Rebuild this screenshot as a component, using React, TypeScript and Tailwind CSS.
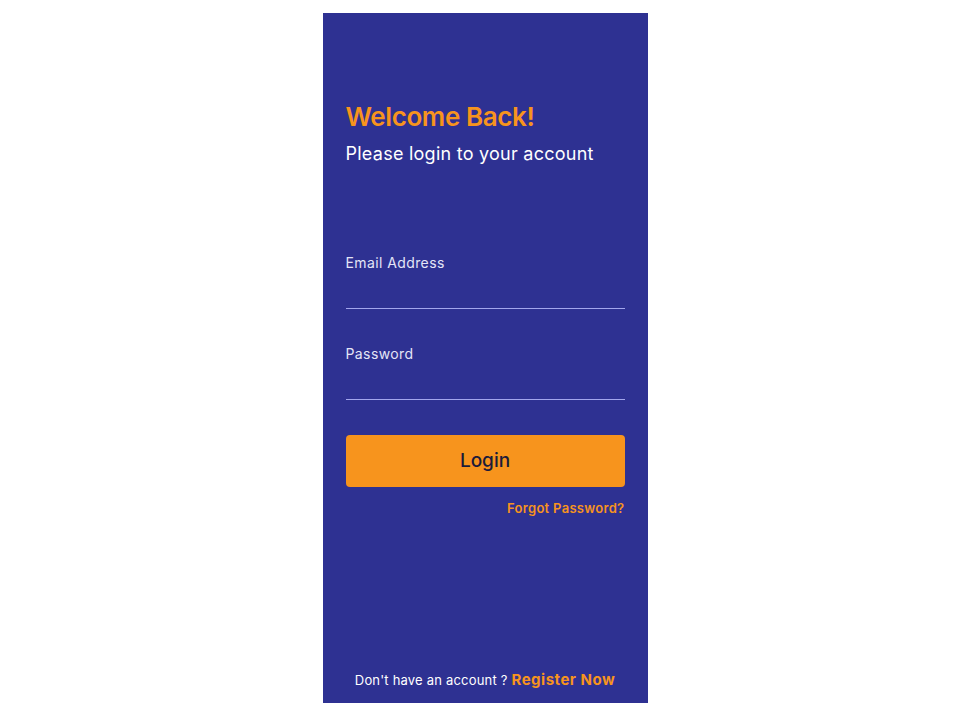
export default function App() {
  return (
    <div className="flex min-h-[720px] w-full justify-center bg-white pl-[10px] pt-[13px]" style={{ fontFamily: 'Inter, "Open Sans", sans-serif' }}>
      <div className="flex h-[690px] w-[325px] flex-col bg-[#2e3192] px-[23px]">
        {/* heading */}
        <div className="pt-[86px]">
          <h1 className="text-[26px] font-semibold leading-[36px] tracking-[-0.4px] text-[#f7941d]">Welcome Back!</h1>
          <p className="mt-[6px] text-[18px] leading-[26px] tracking-[0.25px] text-white">Please login to your account</p>
        </div>

        {/* form */}
        <div className="mt-[86px] flex flex-col">
          <label className="text-[14px] leading-[20px] tracking-[0.4px] text-[#e4e5f7]">Email Address</label>
          <input
            type="email"
            className="h-[36px] w-full border-b border-[#a3a6ec] bg-transparent text-[14px] text-white outline-none"
          />
          <label className="mt-[35px] text-[14px] leading-[20px] tracking-[0.4px] text-[#e4e5f7]">Password</label>
          <input
            type="password"
            className="h-[36px] w-full border-b border-[#a3a6ec] bg-transparent text-[14px] text-white outline-none"
          />

          <button className="mt-[35px] h-[52px] w-full rounded-[4px] bg-[#f7941d] text-[19px] font-medium text-[#1b1b3a]">
            Login
          </button>
          <div className="mt-[8px] text-right">
            <a className="text-[13px] font-semibold tracking-[0.3px] text-[#f7941d]">Forgot Password?</a>
          </div>
        </div>

        {/* footer */}
        <div className="mt-auto pb-[12px] text-center">
          <span className="text-[13px] tracking-[0.2px] text-white">Don't have an account ? </span>
          <a className="text-[15px] font-bold tracking-[0.5px] text-[#f7941d]">Register Now</a>
        </div>
      </div>
    </div>
  );
}
